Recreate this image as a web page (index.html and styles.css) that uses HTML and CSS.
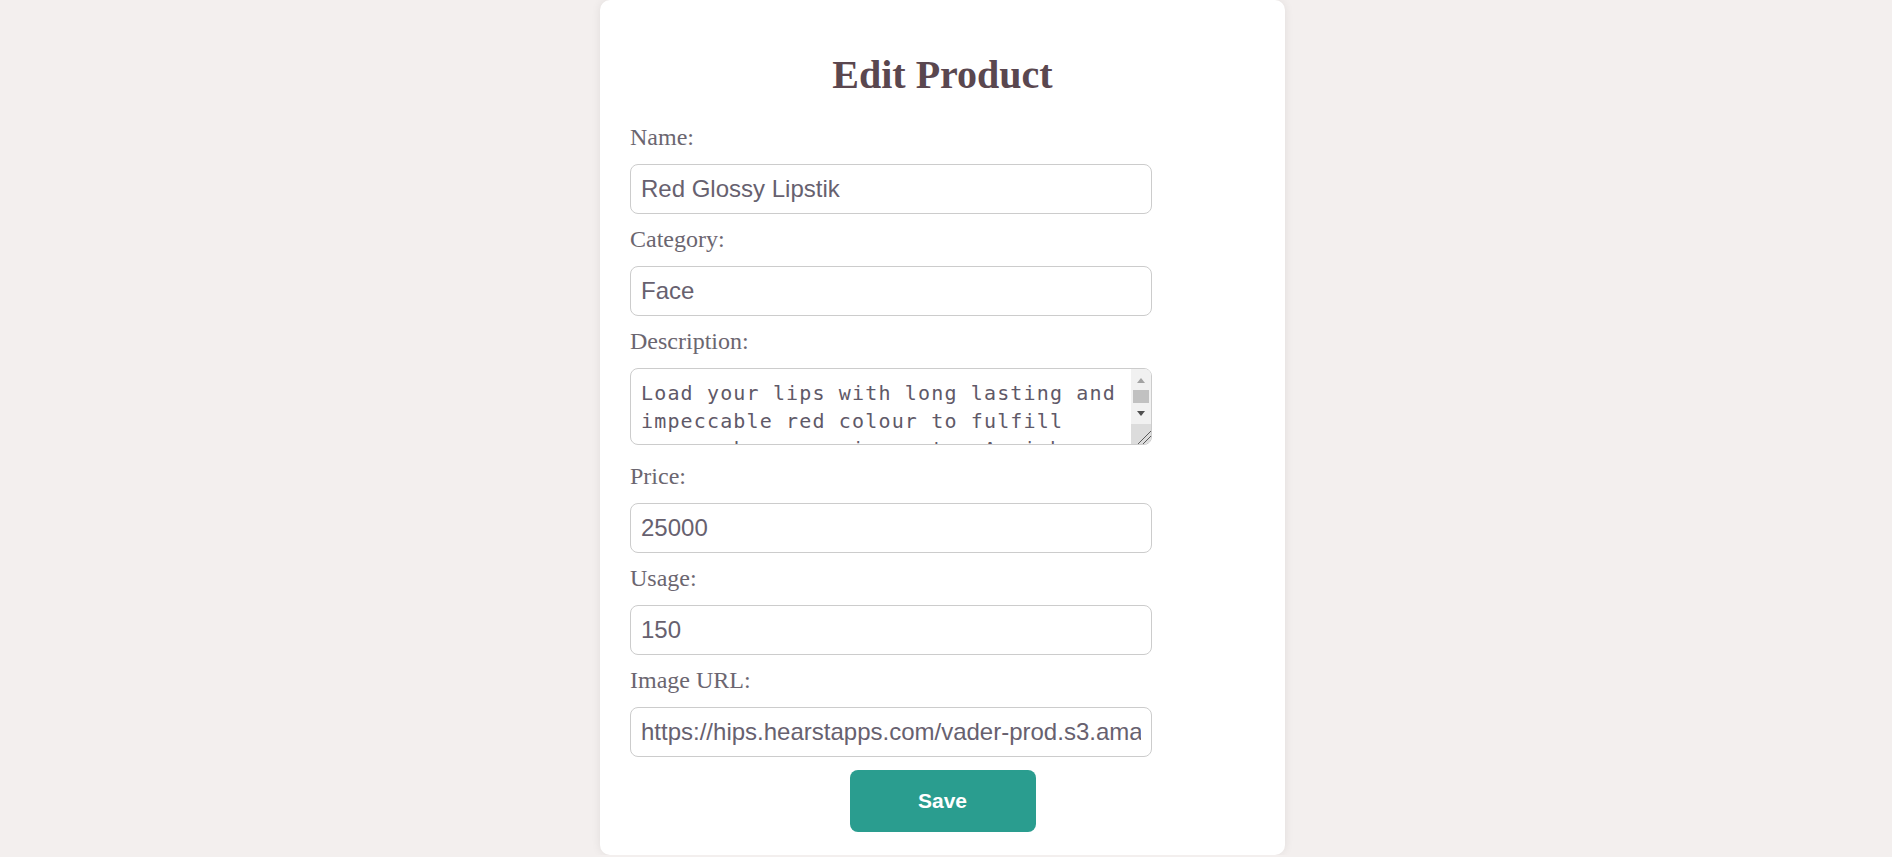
FILE: index.html
```html
<!DOCTYPE html>
<html lang="en">
<head>
<meta charset="utf-8">
<title>Edit Product</title>
<link rel="stylesheet" href="styles.css">
</head>
<body>
  <main class="card">
    <h2 class="title">Edit Product</h2>
    <form class="form">
      <label class="label" for="name">Name:</label>
      <input class="field" id="name" type="text" value="Red Glossy Lipstik">
      <label class="label" for="category">Category:</label>
      <input class="field" id="category" type="text" value="Face">
      <label class="label" for="description">Description:</label>
      <div class="area-wrap">
        <textarea class="field area" id="description">Load your lips with long lasting and impeccable red colour to fulfill your makeup requirements. A rich, creamy formula that glides on smoothly and stays put all day.</textarea>
        <div class="scrollbar" aria-hidden="true">
          <span class="sb-btn"><span class="arrow-up"></span></span>
          <span class="sb-thumb"></span>
          <span class="sb-fill"></span>
          <span class="sb-btn"><span class="arrow-down"></span></span>
        </div>
        <span class="grip" aria-hidden="true"></span>
      </div>
      <label class="label" for="price">Price:</label>
      <input class="field" id="price" type="text" value="25000">
      <label class="label" for="usage">Usage:</label>
      <input class="field" id="usage" type="text" value="150">
      <label class="label" for="image">Image URL:</label>
      <input class="field" id="image" type="text" value="https://hips.hearstapps.com/vader-prod.s3.amazonaws.com/red-glossy-lipstick.jpg">
      <button class="save" type="button">Save</button>
    </form>
  </main>
</body>
</html>
```
FILE: styles.css
```css
html, body {
  margin: 0;
  padding: 0;
}
body {
  background: #f3efee;
  display: flex;
  justify-content: center;
  padding-right: 7px;
  font-family: "Liberation Serif", "Times New Roman", serif;
}
.card {
  width: 685px;
  box-sizing: border-box;
  background: #ffffff;
  border-radius: 10px;
  box-shadow: 0 0 10px rgba(0, 0, 0, 0.08);
  padding: 52px 30px 23px;
}
.title {
  margin: 0 0 26px;
  font-family: "Liberation Serif", "Times New Roman", serif;
  font-size: 40px;
  font-weight: bold;
  line-height: 46px;
  text-align: center;
  color: #5a474f;
}
.form {
  display: flex;
  flex-direction: column;
  align-items: flex-start;
}
.label {
  display: block;
  font-size: 24px;
  line-height: 27.6px;
  color: #6b6670;
  margin: 0 0 12px;
}
.field {
  display: block;
  box-sizing: border-box;
  width: 522px;
  height: 50px;
  margin: 0 0 12.5px;
  padding: 10px;
  border: 1px solid #cccccc;
  border-radius: 8px;
  font-family: "Liberation Sans", Arial, sans-serif;
  font-size: 24px;
  color: #67616f;
  background: #ffffff;
  outline: none;
}
.area-wrap {
  position: relative;
  width: 522px;
  height: 77px;
  margin: 0 0 18.5px;
}
.area {
  height: 77px;
  margin: 0;
  padding-right: 30px;
  font-family: "DejaVu Sans Mono", monospace;
  font-size: 20px;
  letter-spacing: 1.15px;
  line-height: 28px;
  color: #5f5968;
  resize: none;
  overflow: hidden;
}
.scrollbar {
  position: absolute;
  top: 1px;
  right: 1px;
  width: 20px;
  height: 55px;
  background: #f1f1f1;
  border-top-right-radius: 6px;
  display: flex;
  flex-direction: column;
}
.sb-btn {
  height: 19px;
  display: flex;
  align-items: center;
  justify-content: center;
  flex: none;
}
.arrow-up {
  width: 0;
  height: 0;
  border-left: 4.5px solid transparent;
  border-right: 4.5px solid transparent;
  border-bottom: 5px solid #a3a3a3;
  margin-top: 4px;
}
.arrow-down {
  width: 0;
  height: 0;
  border-left: 4.5px solid transparent;
  border-right: 4.5px solid transparent;
  border-top: 5px solid #505050;
  margin-bottom: 2px;
}
.sb-thumb {
  flex: none;
  height: 13px;
  margin: 2px 2px 0;
  background: #c1c1c1;
}
.sb-fill {
  flex: 1;
}
.grip {
  position: absolute;
  right: 1px;
  bottom: 1px;
  width: 20px;
  height: 20px;
  border-bottom-right-radius: 7px;
  background:
    linear-gradient(135deg, transparent 0 66%, #5a5a5a 66% 70%, transparent 70% 78%, #5a5a5a 78% 82%, transparent 82%),
    #dcdcdc;
}
.save {
  align-self: center;
  margin-top: 0;
  width: 186px;
  height: 62px;
  border: none;
  border-radius: 8px;
  background: #2a9d8f;
  color: #ffffff;
  font-family: "Liberation Sans", Arial, sans-serif;
  font-size: 21px;
  font-weight: bold;
  cursor: pointer;
}
```
